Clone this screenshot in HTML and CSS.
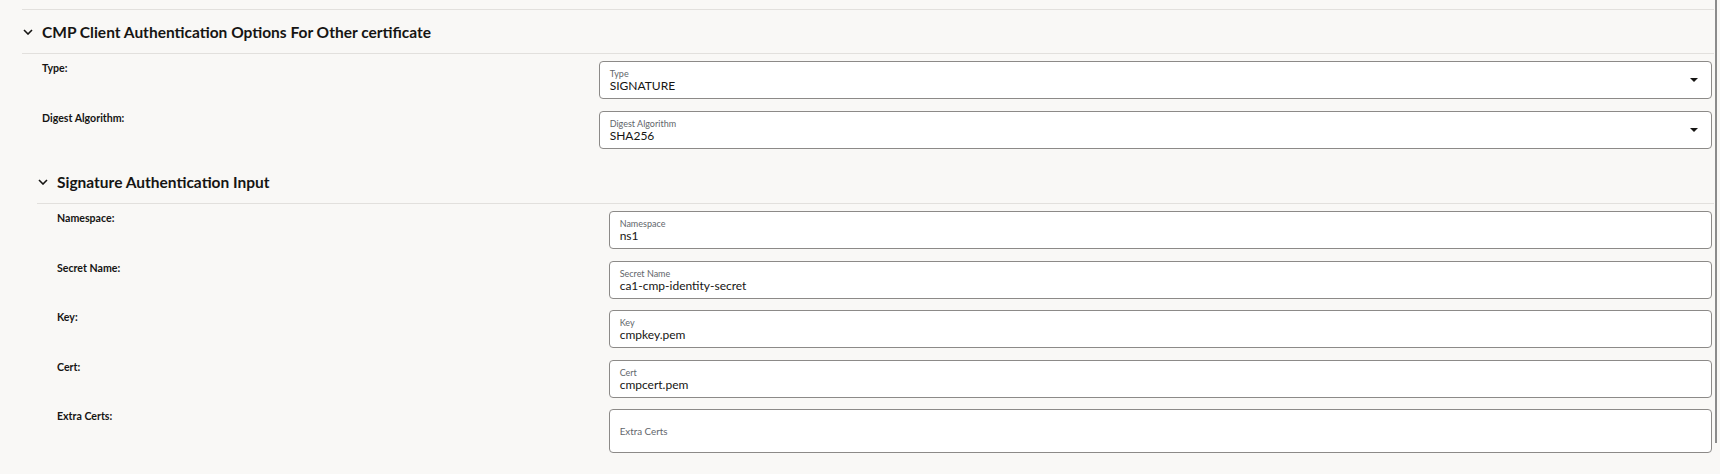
FILE: index.html
```html
<!DOCTYPE html>
<html lang="en">
<head>
<meta charset="utf-8">
<title>CMP Client Authentication Options</title>
<link rel="stylesheet" href="styles.css">
</head>
<body>
<div class="page">
  <section class="section">
    <div class="section-header">
      <svg class="chevron" viewBox="0 0 10 6" width="10" height="6"><path d="M1 1 L5 5 L9 1" fill="none" stroke="#161513" stroke-width="1.6"/></svg>
      <h2 class="section-title">CMP Client Authentication Options For Other certificate</h2>
    </div>
    <div class="section-body">
      <div class="form-row">
        <div class="row-label">Type:</div>
        <div class="field select">
          <div class="field-text">
            <span class="field-label">Type</span>
            <span class="field-value">SIGNATURE</span>
          </div>
          <span class="caret"></span>
        </div>
      </div>
      <div class="form-row">
        <div class="row-label">Digest Algorithm:</div>
        <div class="field select">
          <div class="field-text">
            <span class="field-label">Digest Algorithm</span>
            <span class="field-value">SHA256</span>
          </div>
          <span class="caret"></span>
        </div>
      </div>

      <section class="section nested">
        <div class="section-header">
          <svg class="chevron" viewBox="0 0 10 6" width="10" height="6"><path d="M1 1 L5 5 L9 1" fill="none" stroke="#161513" stroke-width="1.6"/></svg>
          <h3 class="section-title">Signature Authentication Input</h3>
        </div>
        <div class="section-body">
          <div class="form-row">
            <div class="row-label">Namespace:</div>
            <div class="field">
              <div class="field-text">
                <span class="field-label">Namespace</span>
                <span class="field-value">ns1</span>
              </div>
            </div>
          </div>
          <div class="form-row">
            <div class="row-label">Secret Name:</div>
            <div class="field">
              <div class="field-text">
                <span class="field-label">Secret Name</span>
                <span class="field-value">ca1-cmp-identity-secret</span>
              </div>
            </div>
          </div>
          <div class="form-row">
            <div class="row-label">Key:</div>
            <div class="field">
              <div class="field-text">
                <span class="field-label">Key</span>
                <span class="field-value">cmpkey.pem</span>
              </div>
            </div>
          </div>
          <div class="form-row">
            <div class="row-label">Cert:</div>
            <div class="field">
              <div class="field-text">
                <span class="field-label">Cert</span>
                <span class="field-value">cmpcert.pem</span>
              </div>
            </div>
          </div>
          <div class="form-row">
            <div class="row-label">Extra Certs:</div>
            <div class="field empty">
              <span class="placeholder">Extra Certs</span>
            </div>
          </div>
        </div>
      </section>
    </div>
  </section>
</div>
<div class="scroll-thumb"></div>
</body>
</html>
```
FILE: styles.css
```css
html, body {
  margin: 0;
  padding: 0;
  background: #f9f8f6;
}
body {
  font-family: Lato, "Open Sans", sans-serif;
  color: #161513;
  height: 474px;
  overflow: hidden;
}
.page {
  padding: 0 6px 0 22px;
}
.section {
  margin-top: 9px;
  border-top: 1px solid #e2e0dd;
}
.section.nested {
  margin-top: 0;
  margin-left: 15px;
  border-top: none;
}
.section-header {
  height: 43px;
  display: flex;
  align-items: center;
  border-bottom: 1px solid #e2e0dd;
}
.chevron {
  display: block;
  margin-left: 1px;
  width: 10px;
  height: 6px;
}
.section-title {
  margin: 0 0 0 9px;
  font-size: 15.5px;
  font-weight: 700;
  line-height: 20px;
  color: #161513;
}
.section-body {
  padding-top: 7px;
}
.form-row {
  display: grid;
  grid-template-columns: 1fr 2fr;
  padding: 0 2px 0 20px;
  margin-bottom: 11.5px;
}
.row-label {
  font-size: 10.6px;
  font-weight: 700;
  line-height: 12px;
  padding-top: 1px;
  color: #161513;
}
.field {
  height: 38px;
  box-sizing: border-box;
  border: 1px solid #8c8a88;
  border-radius: 4px;
  background: #ffffff;
  padding: 0 10px;
  display: flex;
  align-items: flex-start;
}
.field-text {
  flex: 1;
  display: flex;
  flex-direction: column;
  padding-top: 6px;
}
.field-label {
  font-size: 9px;
  line-height: 11px;
  color: #62666b;
}
.field-value {
  font-size: 12px;
  line-height: 14px;
  color: #161513;
}
.select {
  align-items: center;
  padding-right: 13px;
}
.select .field-text {
  align-self: flex-start;
}
.caret {
  width: 0;
  height: 0;
  border-left: 4px solid transparent;
  border-right: 4px solid transparent;
  border-top: 4.5px solid #161513;
}
.field.empty {
  height: 44px;
  align-items: center;
}
.placeholder {
  font-size: 9.8px;
  color: #62666b;
}
.scroll-thumb {
  position: fixed;
  top: 0;
  right: 3px;
  width: 2px;
  height: 443px;
  background: #8b8b8b;
}
```
